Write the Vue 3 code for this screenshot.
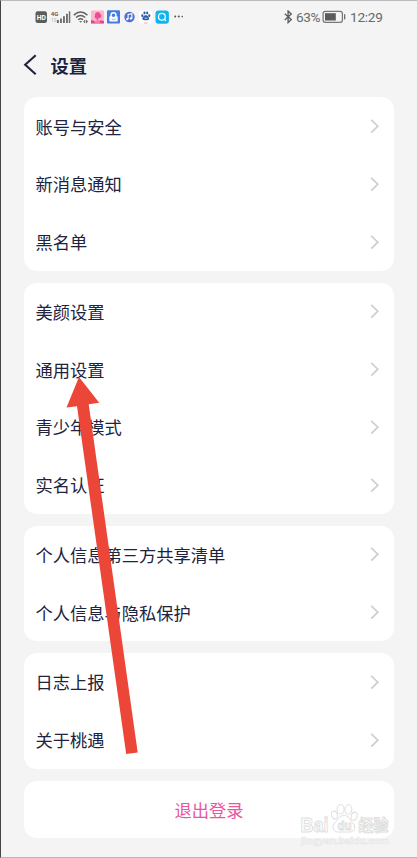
<script setup>
const groups = [
  ['账号与安全', '新消息通知', '黑名单'],
  ['美颜设置', '通用设置', '青少年模式', '实名认证'],
  ['个人信息第三方共享清单', '个人信息与隐私保护'],
  ['日志上报', '关于桃遇'],
]
</script>

<template>
  <div class="screen">
    <div class="status">
      <svg class="status-icons" width="152" height="20" viewBox="0 0 152 20">
        <rect x="0.5" y="4.3" width="11.5" height="11.7" rx="2.2" fill="#5c5c5c" />
        <text x="6.3" y="12.9" class="hd">HD</text>
        <text x="15.7" y="9" class="net">4G</text>
        <text x="16" y="15.4" class="net faint">1S</text>
        <g fill="#707070">
          <rect x="22" y="13" width="1.9" height="3" />
          <rect x="25" y="11.5" width="1.9" height="4.5" />
          <rect x="28" y="9.2" width="1.9" height="6.8" />
          <rect x="31" y="6.8" width="1.9" height="9.2" />
          <rect x="33.8" y="4.3" width="1.5" height="11.7" />
        </g>
        <g fill="none" stroke="#626262" stroke-width="1.45">
          <path d="M38.8 8.1Q45.6 1.7 52.4 8.1" />
          <path d="M41 10.5Q45.6 6.3 50.2 10.5" />
          <path d="M43.2 12.8Q45.6 10.6 48 12.8" />
        </g>
        <path d="M44.2 14L45.6 15.8 47 14Z" fill="#626262" />
        <path d="M48.2 14.5l2-2v4zM53 14.5l-2-2v4z" fill="#666" />
        <rect x="56" y="3.5" width="13" height="13" rx="1" fill="#ffb5cf" />
        <path d="M60 8.2a2.7 2.7 0 0 1 5-1.8q2.4 1.6.8 4l-2.6 1v2h-1.5v-2q-3-.2-1.7-3.2z" fill="#f04d8e" />
        <path d="M56 13l4 1 4-1 5 1v2.5H56z" fill="#e5468a" />
        <text x="62.5" y="16" class="tiny">HOT</text>
        <rect x="72" y="3.3" width="13" height="13.3" rx="1" fill="#427ce4" />
        <rect x="74.3" y="9.3" width="8.4" height="5.2" rx=".8" fill="#fff" />
        <circle cx="78.5" cy="8.2" r="2.5" fill="#427ce4" stroke="#fff" stroke-width="1.4" />
        <path d="M76.7 12q1.8 1.3 3.6 0" fill="none" stroke="#427ce4" stroke-width=".6" />
        <circle cx="94.5" cy="10" r="5.2" fill="#506ed4" />
        <path d="M93.1 12V7.4l3.8-.8v4.6" fill="none" stroke="#fff" stroke-width="1.1" />
        <circle cx="92.3" cy="12.1" r="1.2" fill="#fff" /><circle cx="96" cy="11.4" r="1.2" fill="#fff" />
        <rect x="104" y="3.5" width="13.3" height="13.3" rx="3" fill="#fff" />
        <g fill="#315ca8">
          <ellipse cx="107.3" cy="8.7" rx="1.1" ry="1.4" /><ellipse cx="109.5" cy="6" rx="1.1" ry="1.4" />
          <ellipse cx="112.2" cy="6" rx="1.1" ry="1.4" /><ellipse cx="114.3" cy="8.7" rx="1.1" ry="1.4" />
          <path d="M110.8 8.2c1.8 0 3.6 2.2 3.3 4-.5 1.5-6 1.5-6.6 0-.3-1.8 1.5-4 3.3-4z" />
        </g>
        <path d="M109.5 11.2h3" stroke="#fff" stroke-width=".7" />
        <path d="M108.8 16h4" stroke="#ee9caa" stroke-width=".9" />
        <rect x="120.5" y="3.5" width="13.4" height="13.3" rx="3.2" fill="#0eb5ef" />
        <circle cx="126.9" cy="9.7" r="3.4" fill="none" stroke="#fff" stroke-width="1.2" />
        <path d="M129.3 12.2l1.7 1.7" stroke="#fff" stroke-width="1.3" />
        <g fill="#555"><circle cx="140.2" cy="9.6" r="1" /><circle cx="143.8" cy="9.6" r="1" /><circle cx="147.2" cy="9.6" r=".8" /></g>
      </svg>
      <div class="status-right">
        <svg width="9" height="14" viewBox="0 0 9 14">
          <path d="M.8 3.7L7.3 9.6 4.1 12.6V1L7.3 4 .8 10" fill="none" stroke="#5d5d5d" stroke-width="1.35" />
        </svg>
        <span class="percent">63%</span>
        <svg class="battery" width="25" height="14" viewBox="0 0 25 14">
          <rect x="1.1" y="1.3" width="19.3" height="11" rx="2.3" fill="none" stroke="#777" stroke-width="1.25" />
          <rect x="3" y="3.2" width="10.8" height="7.3" fill="#5b5b5b" />
          <rect x="22" y="4.2" width="1.3" height="5.2" fill="#707070" />
        </svg>
        <span class="time">12:29</span>
      </div>
    </div>
    <header class="header">
      <svg width="14" height="22" viewBox="0 0 14 22">
        <path d="M12.7 1.2L2.2 10.7 12.7 20.2" fill="none" stroke="#20233d" stroke-width="2.1" />
      </svg>
      <h1>设置</h1>
    </header>
    <main class="groups">
      <section v-for="(rows, i) in groups" :key="i" class="card">
        <div v-for="row in rows" :key="row" class="row">
          <span class="label">{{ row }}</span>
          <svg width="10" height="16" viewBox="0 0 10 16">
            <path d="M1.2 1.8L7.8 8.2 1.2 14.6" fill="none" stroke="#cfd0d1" stroke-width="1.8" />
          </svg>
        </div>
      </section>
      <section class="card logout"><span class="label">退出登录</span></section>
    </main>

    <svg class="arrow" width="78" height="382" viewBox="0 0 78 382">
      <path d="M17 2L37.2 27.8 26.7 29.3 75.7 377.4 64.2 379 15 31.2 4.5 32.6Z" fill="#ec4638" />
    </svg>

    <svg class="watermark" width="96" height="50" viewBox="0 0 96 50">
      <g class="outline">
        <text x="2.5" y="31" class="brand" textLength="28" lengthAdjust="spacingAndGlyphs">Bai</text>
        <ellipse cx="36.5" cy="14" rx="2.8" ry="3.9" transform="rotate(-18 36.5 14)" />
        <ellipse cx="42.6" cy="8.3" rx="3.4" ry="4.7" />
        <ellipse cx="50.4" cy="8.5" rx="3.4" ry="4.7" transform="rotate(10 50.4 8.5)" />
        <ellipse cx="56.1" cy="15.2" rx="2.9" ry="4.1" transform="rotate(18 56.1 15.2)" />
        <path d="M46.3 14.5c4.5 0 5.3 4.3 8.5 7.5 3.5 3.5 1.7 9-2.5 9-4-.1-8-.1-12 0-5 0-7-5-3.5-9s5-7.5 9.5-7.5z" />
        <text x="39.5" y="29" class="du" textLength="14" lengthAdjust="spacingAndGlyphs">du</text>
        <text x="60.5" y="30.2" class="cjk" textLength="30" lengthAdjust="spacingAndGlyphs">经验</text>
      </g>
      <text x="3" y="43" class="url" textLength="88" lengthAdjust="spacingAndGlyphs">jingyan.baidu.com</text>
    </svg>
  </div>
</template>

<style>
body { margin: 0; }
</style>

<style scoped>
.screen {
  position: relative;
  box-sizing: border-box;
  width: 417px;
  height: 858px;
  overflow: hidden;
  background: #f4f4f4;
  border-top: 1px solid #bababa;
  border-bottom: 1px solid #b8b8b8;
  border-left: 1px solid #454548;
  color: #20233d;
  font-family: "Noto Sans CJK SC", sans-serif;
}
.status {
  display: flex;
  justify-content: space-between;
  height: 32px;
  padding: 6px 33px 0 34px;
  box-sizing: border-box;
}
.status-right { display: flex; align-items: center; height: 20px; color: #686868; font: 14px/20px Roboto, sans-serif; }
.percent { width: 26px; margin-left: 3px; font-size: 13.6px; letter-spacing: -.35px; }
.time { margin-left: 3px; width: 34px; font-size: 13.6px; letter-spacing: -.25px; }
.hd { font: bold 6.8px Roboto, sans-serif; fill: #fff; text-anchor: middle; }
.net { font: bold 6px Roboto, sans-serif; fill: #5e5e5e; }
.faint { font-size: 5px; fill: #c6c6c6; }
.tiny { font: bold 3px Roboto, sans-serif; fill: #ffb5cf; text-anchor: middle; }
.header { display: flex; align-items: center; height: 64.3px; padding-left: 22px; }
.header h1 { margin: 0 0 0 13.5px; font-size: 18.3px; line-height: 28px; font-weight: 700; }
.groups { display: flex; flex-direction: column; gap: 12px; padding: 0 23px; }
.card { border-radius: 13px; background: #fff; }
.row { display: flex; align-items: center; justify-content: space-between; height: 57.75px; padding: 0 14px 0 11.5px; }
.label { margin-top: 1px; font-size: 17.25px; line-height: 26px; }
.logout { display: flex; align-items: center; justify-content: center; height: 57.75px; color: #e9569f; }
.logout .label { margin-top: 1px; }
.arrow { position: absolute; left: 61px; top: 374px; }
.watermark { position: absolute; left: 297px; top: 800px; }
.outline { fill: #fff; stroke: #dedede; stroke-width: 1; }
.brand { font: bold 20.5px "Liberation Sans", sans-serif; }
.du { font: bold 13px "Liberation Sans", sans-serif; }
.cjk { font: bold 15.5px/1 "Noto Sans CJK SC", sans-serif; }
.url { font: bold 9.5px "Liberation Sans", sans-serif; fill: #f8f8f8; stroke: #e4e4e4; stroke-width: .5; }
</style>
